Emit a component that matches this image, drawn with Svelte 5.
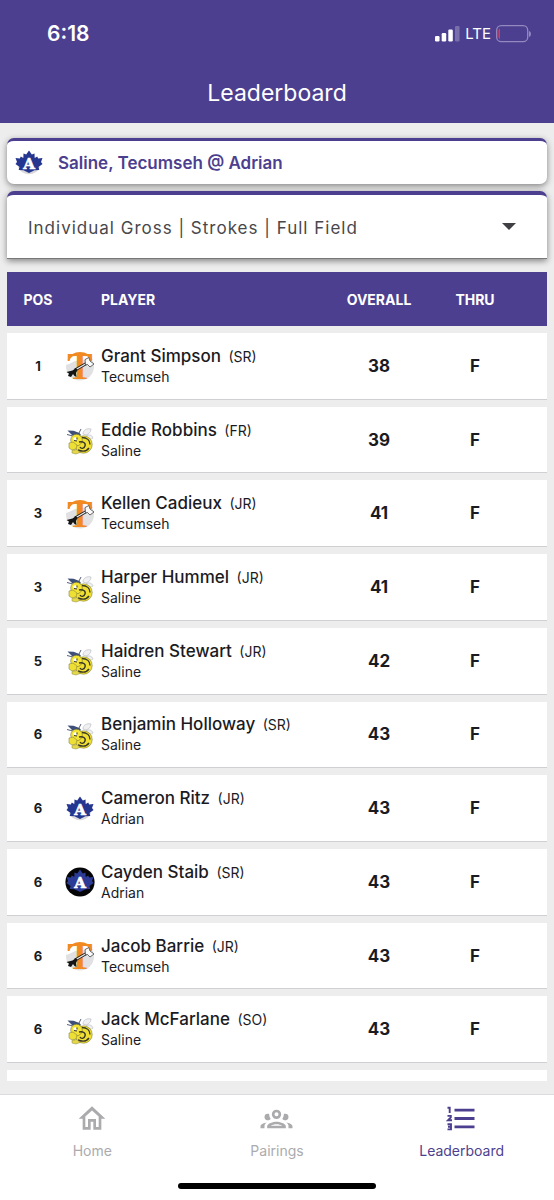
<script lang="ts">
  type Team = 'tecumseh' | 'saline' | 'adrian' | 'adrian-dark';

  interface Player {
    pos: number;
    name: string;
    year: string;
    school: string;
    logo: Team;
    overall: number;
    thru: string;
  }

  const players: Player[] = [
    { pos: 1, name: 'Grant Simpson', year: 'SR', school: 'Tecumseh', logo: 'tecumseh', overall: 38, thru: 'F' },
    { pos: 2, name: 'Eddie Robbins', year: 'FR', school: 'Saline', logo: 'saline', overall: 39, thru: 'F' },
    { pos: 3, name: 'Kellen Cadieux', year: 'JR', school: 'Tecumseh', logo: 'tecumseh', overall: 41, thru: 'F' },
    { pos: 3, name: 'Harper Hummel', year: 'JR', school: 'Saline', logo: 'saline', overall: 41, thru: 'F' },
    { pos: 5, name: 'Haidren Stewart', year: 'JR', school: 'Saline', logo: 'saline', overall: 42, thru: 'F' },
    { pos: 6, name: 'Benjamin Holloway', year: 'SR', school: 'Saline', logo: 'saline', overall: 43, thru: 'F' },
    { pos: 6, name: 'Cameron Ritz', year: 'JR', school: 'Adrian', logo: 'adrian', overall: 43, thru: 'F' },
    { pos: 6, name: 'Cayden Staib', year: 'SR', school: 'Adrian', logo: 'adrian-dark', overall: 43, thru: 'F' },
    { pos: 6, name: 'Jacob Barrie', year: 'JR', school: 'Tecumseh', logo: 'tecumseh', overall: 43, thru: 'F' },
    { pos: 6, name: 'Jack McFarlane', year: 'SO', school: 'Saline', logo: 'saline', overall: 43, thru: 'F' },
  ];

  const views = ['Individual Gross | Strokes | Full Field'];
  let view = $state(views[0]);
</script>

{#snippet leaf(dark: boolean)}
  {#if dark}
    <circle cx="15" cy="15" r="14.6" fill="#050507" />
  {:else}
    <path d="M4 19a12 12 0 0 0 22 0z" fill="#d9d9dc" />
  {/if}
  <path
    d="M15 2.500l2.800 4 2.700-1 .2 4.500 2.500-1.500 1 2 4.300-.5-1.500 4 1.500 2-4 3 .8 3-4.800.3-2.500 1.200-3 1.500-3-1.500-2.500-1.200-4.800-.3.8-3-4-3 1.500-2-1.500-4 4.300.5 1-2 2.500 1.500.2-4.500 2.700 1z"
    fill={dark ? '#2b3b96' : '#24368f'}
  />
  <text x="15" y="21" text-anchor="middle" class="leaf-letter">A</text>
{/snippet}

{#snippet logo(team: Team)}
  <svg class="logo" viewBox="0 0 30 30" aria-hidden="true">
    {#if team === 'tecumseh'}
      <circle cx="15" cy="15.500" r="14" fill="#e1e1e3" />
      <path d="M1 14C2 6 8 1 15 1s13 5 14 9l-8-1h-3l-8 1-6 3z" fill="#fff" />
      <text x="15" y="28" text-anchor="middle" class="axe-letter">T</text>
      <path d="M3.500 9C6 3.500 10 2 15 2s9 1.500 11.500 7" fill="none" stroke="#f18a22" stroke-width="2" />
      <path d="M10 19L23 11.500" stroke="#222" stroke-width="3" />
      <path d="M11 18.400L23 11.500" stroke="#eee" stroke-width="1.200" />
      <path d="M1.500 21l6-1.500 3.500-2.500 1.500 2-1.500 3 .5 4-2-1-1.500-2-2 3-3-1 1-2.500z" fill="#151515" />
      <path d="M20 8.500l4-2 1 3.500 4 3-4 3-2.500-2.500-2 .5z" fill="#fafafa" stroke="#444" stroke-width=".8" />
    {:else if team === 'saline'}
      <path d="M18 9c0-4 4-6 8-5 0 3-2 5-5 6zM21 11c3-2 6-1 7 2-2 2-5 1-7-1z" fill="#f0f0f2" stroke="#bcbfc4" stroke-width=".7" />
      <path d="M2.500 5.500l6 .3 6 2.200 1.500 2-3 2-6-2z" fill="#3f5078" />
      <path d="M2 9.500l6 1.500M16 4l-2 4" stroke="#56607a" stroke-width="1" />
      <circle cx="18.500" cy="19.500" r="8.700" fill="#f0df31" stroke="#827d3c" stroke-width=".6" />
      <circle cx="11.500" cy="15" r="5.800" fill="#f3e433" stroke="#77733a" stroke-width=".6" />
      <path d="M17 12.500c5 0 8 3 8 7M14 17c4-1 7 1 6 4s-4 3-5 1M13 25c5 2 9 1 11-2" fill="none" stroke="#38372a" stroke-width="1.400" />
      <path d="M8 13l3-1 1 3-3 1z" fill="#fff" />
      <path d="M9 15.500l3 .5M12 12.500v2M7 18l3 2" stroke="#333" stroke-width="1" />
      <path d="M4 18l4-1 4 3-1 4-4 1-3-2z" fill="#eedf35" stroke="#8c863c" stroke-width=".6" />
      <path d="M7 25.500l5-1 3 3-4 1.500-4-1z" fill="#e4d84a" stroke="#8c863c" stroke-width=".5" />
    {:else}
      {@render leaf(team === 'adrian-dark')}
    {/if}
  </svg>
{/snippet}

<div class="app">
  <header>
    <div class="status">
      <span class="time">6:18</span>
      <div class="indicators">
        <svg width="25" height="16" viewBox="0 0 25 16" fill="#fff" aria-hidden="true">
          <rect x="0" y="10" width="4.500" height="5.500" rx="1.200" />
          <rect x="6.700" y="7" width="4.500" height="8.500" rx="1.200" />
          <rect x="13.300" y="3.500" width="4.500" height="12" rx="1.200" />
          <rect x="20" y="0" width="4.500" height="15.500" rx="1.200" opacity=".25" />
        </svg>
        <span class="network">LTE</span>
        <svg width="35" height="18" viewBox="0 0 35 18" aria-hidden="true">
          <rect x=".7" y=".7" width="31" height="16" rx="4.500" fill="none" stroke="#9389bf" stroke-width="1.300" />
          <path d="M4 3.500v10.500a2 2 0 0 1-1.500-2v-6.500a2 2 0 0 1 1.500-2z" fill="#f0334a" />
          <path d="M33 6q2 .5 2 3t-2 3z" fill="#9389bf" />
        </svg>
      </div>
    </div>
    <h1>Leaderboard</h1>
  </header>

  <main>
    <section class="match">
      {@render logo('adrian')}
      <h2>Saline, Tecumseh @ Adrian</h2>
    </section>

    <div class="picker">
      <select bind:value={view} aria-label="Leaderboard view">
        {#each views as option (option)}
          <option value={option}>{option}</option>
        {/each}
      </select>
      <svg width="14" height="7" viewBox="0 0 14 7" aria-hidden="true">
        <path d="M0 0h14L7 7z" fill="#3f3f44" />
      </svg>
    </div>

    <div class="board">
      <table>
        <thead>
          <tr>
            <th class="pos">POS</th>
            <th class="player">PLAYER</th>
            <th class="overall">OVERALL</th>
            <th class="thru">THRU</th>
          </tr>
        </thead>
        <tbody>
          {#each players as player (player.name)}
            <tr>
              <td class="pos">{player.pos}</td>
              <td>
                <div class="golfer">
                  {@render logo(player.logo)}
                  <div>
                    <div class="name">{player.name} <span class="year">({player.year})</span></div>
                    <div class="school">{player.school}</div>
                  </div>
                </div>
              </td>
              <td class="overall">{player.overall}</td>
              <td class="thru">{player.thru}</td>
            </tr>
          {/each}
          <tr aria-hidden="true"><td colspan="4"></td></tr>
        </tbody>
      </table>
    </div>
  </main>

  <nav>
    <div class="tabs">
      <a href="#home">
        <svg width="32" height="32" viewBox="0 0 24 24" fill="currentColor" aria-hidden="true">
          <path d="M12 5.690l5 4.500V18h-2v-6H9v6H7v-7.810l5-4.500M12 2.500L2 11.800h3v8.200h6v-6h2v6h6v-8.200h3L12 2.500z" />
        </svg>
        <span>Home</span>
      </a>
      <a href="#pairings">
        <svg width="33" height="32" viewBox="0 0 24 24" fill="currentColor" aria-hidden="true">
          <path d="M12 5A3.500 3.500 0 0 0 8.500 8.500A3.500 3.500 0 0 0 12 12A3.500 3.500 0 0 0 15.500 8.500A3.500 3.500 0 0 0 12 5M12 7A1.500 1.500 0 0 1 13.500 8.500A1.500 1.500 0 0 1 12 10A1.500 1.500 0 0 1 10.500 8.500A1.500 1.500 0 0 1 12 7M5.500 8A2.500 2.500 0 0 0 3 10.500C3 11.440 3.530 12.250 4.290 12.680C4.650 12.880 5.060 13 5.500 13C5.940 13 6.350 12.880 6.710 12.680C7.080 12.470 7.390 12.170 7.620 11.810C6.890 10.860 6.500 9.700 6.500 8.500V8.220C6.200 8.080 5.860 8 5.500 8M18.500 8C18.140 8 17.800 8.080 17.500 8.220V8.500C17.500 9.700 17.110 10.860 16.380 11.810C16.500 12 16.630 12.150 16.780 12.300C16.940 12.450 17.100 12.580 17.290 12.680C17.650 12.880 18.060 13 18.500 13C18.940 13 19.350 12.880 19.710 12.680C20.470 12.250 21 11.440 21 10.500A2.500 2.500 0 0 0 18.500 8M12 14C9.660 14 5 15.170 5 17.500V19H19V17.500C19 15.170 14.340 14 12 14M4.710 14.550C2.780 14.780 0 15.760 0 17.500V19H3V17.070C3 16.060 3.690 15.220 4.710 14.550M19.290 14.550C20.310 15.220 21 16.060 21 17.070V19H24V17.500C24 15.760 21.220 14.780 19.290 14.550M12 16C13.530 16 15.240 16.500 16.230 17H7.770C8.760 16.500 10.470 16 12 16Z" />
        </svg>
        <span>Pairings</span>
      </a>
      <a href="#leaderboard" class="active" aria-current="page">
        <svg width="32" height="32" viewBox="0 0 32 32" fill="none" stroke="currentColor" aria-hidden="true">
          <path d="M8.500 7.200h20M8.500 15.500h20M8.500 23.800h20" stroke-width="2.800" />
          <path d="M1.500 4.800h2.200V10M1.500 12.900h3.300v1.500L2 17.300h4M1.500 21.200h3.500v5.200H1.500M2 23.800h3" stroke-width="1.900" />
        </svg>
        <span>Leaderboard</span>
      </a>
    </div>
    <div class="home-bar"></div>
  </nav>
</div>

<style>
  :global(body) {
    margin: 0;
    background: #ededee;
  }

  .app {
    --brand: #4d3f8f;
    display: flex;
    flex-direction: column;
    height: 100vh;
    font-family: Inter, 'Liberation Sans', sans-serif;
    color: #1b1b1f;
  }

  header {
    background: var(--brand);
    color: #fff;
    padding-bottom: 16px;
  }

  .status {
    display: flex;
    align-items: center;
    justify-content: space-between;
    height: 67px;
    padding: 0 23px 0 47px;
  }

  .time {
    font-size: 21px;
    font-weight: 600;
  }

  .indicators {
    display: flex;
    align-items: center;
    gap: 5px;
  }

  .network {
    font-size: 15px;
  }

  h1 {
    margin: 0;
    padding-top: 12px;
    font-size: 23px;
    font-weight: 400;
    line-height: 28px;
    text-align: center;
  }

  main {
    flex: 1;
    min-height: 0;
    display: flex;
    flex-direction: column;
    padding: 15px 7px 13px;
  }

  .match,
  .picker {
    background: #fff;
    box-shadow: 0 2px 6px rgba(0, 0, 0, 0.45);
  }

  .match {
    display: flex;
    align-items: center;
    gap: 14px;
    height: 43px;
    padding: 0 7px;
    border-top: 3px solid var(--brand);
    border-radius: 7px;
  }

  h2 {
    margin: 0;
    font-size: 17px;
    font-weight: 600;
    color: var(--brand);
  }

  .picker {
    position: relative;
    display: flex;
    align-items: center;
    margin-top: 7px;
    border-top: 4px solid var(--brand);
    border-bottom: 1px solid #77777c;
    border-radius: 7px 7px 0 0;
  }

  select {
    appearance: none;
    flex: 1;
    height: 63px;
    padding: 2px 44px 0 21px;
    border: 0;
    background: transparent;
    font-family: inherit;
    font-size: 17px;
    letter-spacing: 1px;
    color: #48484c;
  }

  .picker svg {
    position: absolute;
    right: 31px;
    pointer-events: none;
  }

  .board {
    flex: 1;
    min-height: 0;
    margin-top: 6px;
    overflow-y: auto;
    scrollbar-width: none;
  }

  /* Taller than the board so the next row peeks out at the bottom. */
  table {
    width: 100%;
    height: calc(100% + 63px);
    border-collapse: separate;
    border-spacing: 0 7px;
    table-layout: fixed;
  }

  th {
    height: 54px;
    box-sizing: border-box;
    padding: 0;
    background: var(--brand);
    color: #fff;
    font-size: 14px;
    font-weight: 700;
  }

  td {
    height: 60px;
    box-sizing: border-box;
    padding: 0;
    background: #fff;
    border-bottom: 1px solid #d0d0d4;
  }

  .pos {
    width: 58px;
    box-sizing: border-box;
    padding-left: 4px;
    text-align: center;
  }

  td.pos {
    font-size: 13px;
    font-weight: 700;
  }

  th.player {
    padding-left: 36px;
    text-align: left;
  }

  .overall {
    width: 96px;
    text-align: center;
  }

  .thru {
    width: 120px;
    padding-right: 24px;
    text-align: center;
  }

  td.overall,
  td.thru {
    font-size: 17px;
    font-weight: 700;
  }

  .golfer {
    display: flex;
    align-items: center;
    gap: 6px;
    padding-top: 1px;
  }

  .logo {
    flex: none;
    width: 30px;
    height: 30px;
    overflow: visible;
  }

  .leaf-letter {
    font: bold 15px 'DejaVu Serif', serif;
    fill: #fff;
    stroke: #fff;
    stroke-width: 0.6px;
  }

  .axe-letter {
    font: bold 38px 'Liberation Serif', serif;
    fill: #f18a22;
  }

  .name {
    font-size: 17px;
    font-weight: 500;
    line-height: 20px;
    white-space: nowrap;
  }

  .year {
    margin-left: 3px;
    font-size: 14px;
    font-weight: 400;
  }

  .school {
    font-size: 14px;
    line-height: 20px;
  }

  nav {
    background: #fff;
    border-top: 1px solid #dcdcde;
    padding-bottom: 11px;
  }

  .tabs {
    display: grid;
    grid-template-columns: repeat(3, 1fr);
    padding-top: 8px;
  }

  .tabs a {
    display: flex;
    flex-direction: column;
    align-items: center;
    gap: 6px;
    color: #ababae;
    font-size: 14px;
    line-height: 20px;
    text-decoration: none;
  }

  .tabs a.active {
    color: var(--brand);
  }

  .home-bar {
    width: 198px;
    height: 6px;
    margin: 22px auto 0;
    border-radius: 3px;
    background: #000;
  }
</style>
